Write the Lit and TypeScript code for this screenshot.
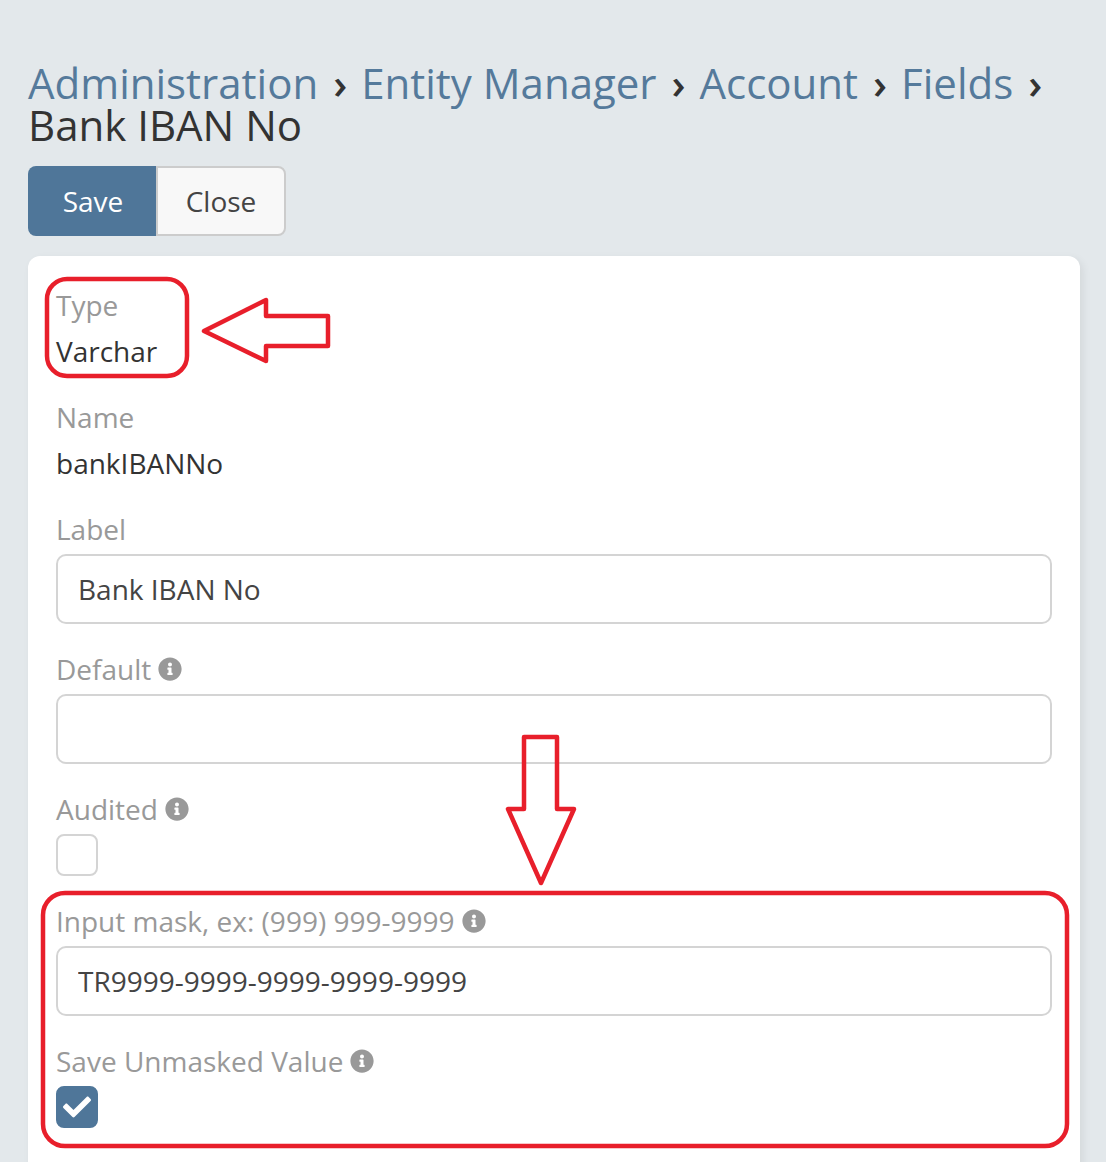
import { LitElement, html, css, svg } from "lit";
import { customElement } from "lit/decorators.js";

const INFO = "M256 8C119.043 8 8 119.083 8 256c0 136.997 111.043 248 248 248s248-111.003 248-248C504 119.083 392.957 8 256 8zm0 110c23.196 0 42 18.804 42 42s-18.804 42-42 42-42-18.804-42-42 18.804-42 42-42zm56 254c0 6.627-5.373 12-12 12h-88c-6.627 0-12-5.373-12-12v-24c0-6.627 5.373-12 12-12h12v-64h-12c-6.627 0-12-5.373-12-12v-24c0-6.627 5.373-12 12-12h64c6.627 0 12 5.373 12 12v100h12c6.627 0 12 5.373 12 12v24z";
const CHECK = "M173.898 439.404l-166.4-166.4c-9.997-9.997-9.997-26.206 0-36.204l36.203-36.204c9.997-9.998 26.207-9.998 36.204 0L192 312.69 432.095 72.596c9.997-9.997 26.207-9.997 36.204 0l36.203 36.204c9.997 9.997 9.997 26.206 0 36.204l-294.4 294.401c-9.998 9.997-26.207 9.997-36.204-.001z";

const info = html`<svg class="info" viewBox="0 0 512 512"><path d=${INFO}></path></svg>`;

@customElement("app-root")
export class AppRoot extends LitElement {
  static styles = css`
    :host {
      display: block;
      position: relative;
      height: 1162px;
      overflow: hidden;
      background: #e3e8eb;
      font-family: "Open Sans", "Liberation Sans", sans-serif;
      font-size: 28px;
      color: #333;
    }
    .page { padding: 62px 26px 0 28px; }
    h3 {
      margin: 0 0 20px;
      font-size: 42px;
      line-height: 42px;
      font-weight: 400;
      color: #333;
    }
    h3 a { color: #557a9b; text-decoration: none; }
    .sep { margin: 0 3px 0 15px; font-size: 42px; font-weight: 600; color: #333; }
    .buttons { display: flex; margin-bottom: 20px; }
    .btn {
      height: 70px;
      box-sizing: border-box;
      display: flex;
      align-items: center;
      justify-content: center;
      font-size: 28px;
    }
    .save {
      width: 128px;
      padding-left: 2px;
      background: #4f7699;
      color: #fff;
      border-radius: 8px 0 0 8px;
    }
    .close {
      width: 130px;
      background: #f8f8f8;
      color: #444;
      border: 2px solid #ccc;
      border-radius: 0 8px 8px 0;
    }
    .card {
      background: #fff;
      border-radius: 12px;
      padding: 30px 28px 28px;
      box-shadow: 3px 3px 8px rgba(0, 0, 0, 0.07);
    }
    .field { margin-bottom: 26px; }
    .label {
      height: 40px;
      box-sizing: border-box;
      padding-bottom: 2px;
      display: flex;
      align-items: center;
      gap: 7px;
      margin-bottom: 4px;
      color: #999;
      font-size: 28px;
    }
    .info { width: 24px; height: 24px; fill: #999; }
    .value { height: 42px; line-height: 42px; color: #333; font-size: 28px; }
    input {
      display: block;
      width: 100%;
      height: 70px;
      box-sizing: border-box;
      border: 2px solid #d4d4d4;
      border-radius: 10px;
      padding: 0 20px;
      background: #fff;
      color: #444;
      font: 28px "Open Sans", "Liberation Sans", sans-serif;
      outline: none;
    }
    .box {
      width: 42px;
      height: 42px;
      box-sizing: border-box;
      border: 2px solid #d4d4d4;
      border-radius: 8px;
      display: flex;
      align-items: center;
      justify-content: center;
    }
    .box.on { background: #4f7699; border-color: #4f7699; }
    .box svg { width: 28px; height: 28px; fill: #fff; }
    .notes {
      position: absolute;
      inset: 0;
      width: 100%;
      height: 100%;
      pointer-events: none;
      fill: none;
      stroke: #e81f2b;
      stroke-width: 4.5;
      stroke-linejoin: round;
    }
  `;

  private crumb(t: string) {
    return html`<a href="#">${t}</a><span class="sep">›</span> `;
  }

  private textField(label: string, value: string, hint = false) {
    return html`<div class="field">
      <div class="label">${label}${hint ? info : ""}</div>
      <input type="text" .value=${value} />
    </div>`;
  }

  private staticField(label: string, value: string) {
    return html`<div class="field">
      <div class="label">${label}</div>
      <div class="value">${value}</div>
    </div>`;
  }

  private boolField(label: string, on: boolean) {
    return html`<div class="field">
      <div class="label">${label}${info}</div>
      <div class="box ${on ? "on" : ""}">
        ${on ? html`<svg viewBox="0 0 512 512"><path d=${CHECK}></path></svg>` : ""}
      </div>
    </div>`;
  }

  render() {
    return html`
      <div class="page">
        <h3>
          ${this.crumb("Administration")} ${this.crumb("Entity Manager")}
          ${this.crumb("Account")} ${this.crumb("Fields")} Bank IBAN No
        </h3>
        <div class="buttons">
          <div class="btn save">Save</div>
          <div class="btn close">Close</div>
        </div>
        <div class="card">
          ${this.staticField("Type", "Varchar")}
          ${this.staticField("Name", "bankIBANNo")}
          ${this.textField("Label", "Bank IBAN No")}
          ${this.textField("Default", "", true)}
          ${this.boolField("Audited", false)}
          ${this.textField("Input mask, ex: (999) 999-9999", "TR9999-9999-9999-9999-9999", true)}
          ${this.boolField("Save Unmasked Value", true)}
        </div>
      </div>
      <svg class="notes" viewBox="0 0 1106 1162">
        ${svg`
          <rect x="47" y="279" width="140" height="97" rx="20"></rect>
          <path d="M204 331 L266 300 L266 316 L328 316 L328 346 L266 346 L266 361 Z"></path>
          <path d="M524 737 L557 737 L557 809 L574 809 L541 883 L508 809 L524 809 Z"></path>
          <rect x="43" y="893" width="1024" height="253" rx="22"></rect>
        `}
      </svg>
    `;
  }
}
